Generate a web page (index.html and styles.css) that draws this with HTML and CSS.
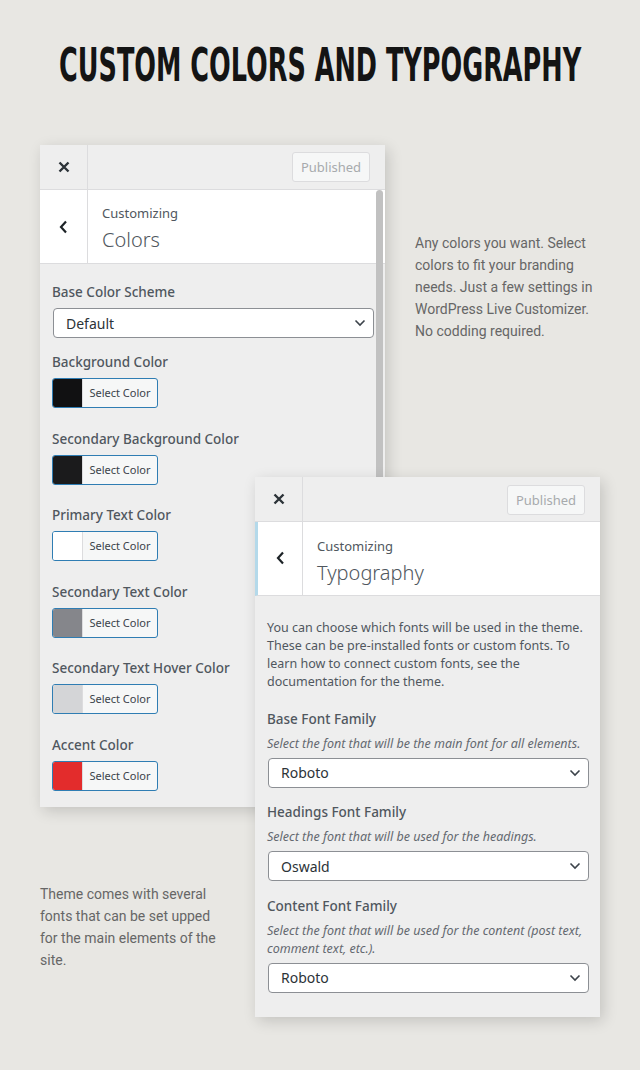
FILE: index.html
```html
<!DOCTYPE html>
<html lang="en">
<head>
    <meta charset="UTF-8">
    <meta name="viewport" content="width=device-width, initial-scale=1.0">
    <title>Custom Colors and Typography</title>
    <link rel="stylesheet" href="styles.css">
</head>
<body>
    <h1 class="headline"><span>Custom Colors and Typography</span></h1>

    <div class="showcase">
        <!-- Colors panel with the text on its right -->
        <div class="row row-top">
            <section class="panel panel-colors">
                <div class="panel-bar">
                    <span class="bar-close">
                        <svg width="12" height="12" viewBox="0 0 12 12"><path d="M1.5 1.5l9 9M10.5 1.5l-9 9" stroke="#2c3338" stroke-width="2.4" fill="none"/></svg>
                    </span>
                    <span class="bar-publish">Published</span>
                </div>
                <div class="panel-scroll">
                    <div class="panel-title">
                        <span class="title-back">
                            <svg width="9" height="14" viewBox="0 0 9 14"><path d="M7 1.5L2 7l5 5.5" stroke="#1d2327" stroke-width="2.2" fill="none"/></svg>
                        </span>
                        <div class="title-text">
                            <span class="title-small">Customizing</span>
                            <span class="title-big">Colors</span>
                        </div>
                    </div>
                    <div class="panel-body">
                        <div class="field field-scheme">
                            <label class="field-label">Base Color Scheme</label>
                            <div class="select-box">
                                <span>Default</span>
                                <svg width="12" height="8" viewBox="0 0 12 8"><path d="M1.5 1.5L6 6l4.5-4.5" stroke="#3c434a" stroke-width="1.6" fill="none"/></svg>
                            </div>
                        </div>
                        <div class="field">
                            <label class="field-label">Background Color</label>
                            <div class="color-btn"><span class="swatch swatch-black"></span><span class="color-text">Select Color</span></div>
                        </div>
                        <div class="field">
                            <label class="field-label">Secondary Background Color</label>
                            <div class="color-btn"><span class="swatch swatch-dark"></span><span class="color-text">Select Color</span></div>
                        </div>
                        <div class="field">
                            <label class="field-label">Primary Text Color</label>
                            <div class="color-btn"><span class="swatch swatch-white"></span><span class="color-text">Select Color</span></div>
                        </div>
                        <div class="field">
                            <label class="field-label">Secondary Text Color</label>
                            <div class="color-btn"><span class="swatch swatch-gray"></span><span class="color-text">Select Color</span></div>
                        </div>
                        <div class="field">
                            <label class="field-label">Secondary Text Hover Color</label>
                            <div class="color-btn"><span class="swatch swatch-light"></span><span class="color-text">Select Color</span></div>
                        </div>
                        <div class="field">
                            <label class="field-label">Accent Color</label>
                            <div class="color-btn"><span class="swatch swatch-red"></span><span class="color-text">Select Color</span></div>
                        </div>
                    </div>
                    <div class="scroll-thumb"></div>
                </div>
            </section>
            <p class="blurb blurb-colors">Any colors you want. Select colors to fit your branding needs. Just a few settings in WordPress Live Customizer. No codding required.</p>
        </div>

        <!-- Typography panel, laid over the bottom of the colors panel -->
        <div class="row row-bottom">
            <p class="blurb blurb-fonts">Theme comes with several fonts that can be set upped for the main elements of the site.</p>
            <section class="panel panel-type">
                <div class="panel-bar">
                    <span class="bar-close">
                        <svg width="12" height="12" viewBox="0 0 12 12"><path d="M1.5 1.5l9 9M10.5 1.5l-9 9" stroke="#2c3338" stroke-width="2.4" fill="none"/></svg>
                    </span>
                    <span class="bar-publish">Published</span>
                </div>
                <div class="panel-title title-active">
                    <span class="title-back">
                        <svg width="9" height="14" viewBox="0 0 9 14"><path d="M7 1.5L2 7l5 5.5" stroke="#1d2327" stroke-width="2.2" fill="none"/></svg>
                    </span>
                    <div class="title-text">
                        <span class="title-small">Customizing</span>
                        <span class="title-big">Typography</span>
                    </div>
                </div>
                <div class="panel-body body-type">
                    <p class="panel-desc">You can choose which fonts will be used in the theme. These can be pre-installed fonts or custom fonts. To learn how to connect custom fonts, see the documentation for the theme.</p>
                    <div class="font-field">
                        <label class="field-label">Base Font Family</label>
                        <p class="field-note">Select the font that will be the main font for all elements.</p>
                        <div class="select-box">
                            <span>Roboto</span>
                            <svg width="12" height="8" viewBox="0 0 12 8"><path d="M1.5 1.5L6 6l4.5-4.5" stroke="#3c434a" stroke-width="1.6" fill="none"/></svg>
                        </div>
                    </div>
                    <div class="font-field">
                        <label class="field-label">Headings Font Family</label>
                        <p class="field-note">Select the font that will be used for the headings.</p>
                        <div class="select-box">
                            <span>Oswald</span>
                            <svg width="12" height="8" viewBox="0 0 12 8"><path d="M1.5 1.5L6 6l4.5-4.5" stroke="#3c434a" stroke-width="1.6" fill="none"/></svg>
                        </div>
                    </div>
                    <div class="font-field">
                        <label class="field-label">Content Font Family</label>
                        <p class="field-note">Select the font that will be used for the content (post text, comment text, etc.).</p>
                        <div class="select-box">
                            <span>Roboto</span>
                            <svg width="12" height="8" viewBox="0 0 12 8"><path d="M1.5 1.5L6 6l4.5-4.5" stroke="#3c434a" stroke-width="1.6" fill="none"/></svg>
                        </div>
                    </div>
                </div>
            </section>
        </div>
    </div>
</body>
</html>
```

FILE: styles.css
```css
/* Base */
* {
    margin: 0;
    padding: 0;
    box-sizing: border-box;
}

body {
    background-color: #e8e7e3;
    font-family: "Noto Sans", "Open Sans", sans-serif;
    width: 640px;
    height: 1070px;
    overflow: hidden;
}

/* Page heading, a condensed bold face squeezed to width */
.headline {
    display: flex;
    justify-content: center;
    padding-top: 42px;
    line-height: 46px;
    height: 88px;
}

.headline span {
    flex-shrink: 0;
    white-space: nowrap;
    font-family: "DejaVu Sans Condensed", "Liberation Sans Narrow", sans-serif;
    font-size: 46px;
    font-weight: 700;
    color: #141414;
    text-transform: uppercase;
    transform: scaleX(0.617);
}

.showcase {
    margin-top: 57px;
}

.row {
    display: flex;
    align-items: flex-start;
}

.row-bottom {
    margin-top: -330px;
}

/* Side texts */
.blurb {
    font-family: Roboto, sans-serif;
    font-size: 14px;
    line-height: 22px;
    color: #666;
    width: 185px;
}

.blurb-colors {
    margin-left: 30px;
    margin-top: 87px;
}

.blurb-fonts {
    margin-left: 40px;
    margin-top: 406px;
}

/* Customizer panel */
.panel {
    position: relative;
    width: 345px;
    background-color: #eeeeee;
    box-shadow: 3px 4px 14px rgba(0, 0, 0, 0.16);
}

.panel-colors {
    margin-left: 40px;
}

.panel-type {
    margin-left: 30px;
}

.panel-bar {
    display: flex;
    align-items: center;
    height: 45px;
    border-bottom: 1px solid #dcdcde;
}

.bar-close {
    width: 48px;
    height: 100%;
    display: flex;
    align-items: center;
    justify-content: center;
    border-right: 1px solid #dcdcde;
}

.bar-publish {
    margin-left: auto;
    margin-right: 15px;
    width: 78px;
    height: 30px;
    line-height: 28px;
    text-align: center;
    font-size: 13px;
    color: #a7aaad;
    background-color: #f6f7f7;
    border: 1px solid #dcdcde;
    border-radius: 3px;
}

.panel-type .bar-publish {
    margin-top: 2px;
}

.panel-scroll {
    position: relative;
}

.panel-title {
    display: flex;
    background-color: #fff;
    border-bottom: 1px solid #dcdcde;
    height: 74px;
}

.title-active {
    border-left: 3px solid #b4d9ea;
}

.title-back {
    width: 48px;
    flex-shrink: 0;
    display: flex;
    align-items: center;
    justify-content: center;
    border-right: 1px solid #dcdcde;
}

.title-active .title-back {
    width: 45px;
}

.title-text {
    display: flex;
    flex-direction: column;
    padding: 14px 0 0 14px;
    color: #50575e;
}

.title-small {
    font-size: 13px;
    line-height: 18px;
}

.title-big {
    margin-top: 5px;
    font-size: 20px;
    font-weight: 300;
    line-height: 26px;
}

.title-active .title-text {
    padding-top: 15px;
}

.scroll-thumb {
    position: absolute;
    top: 0;
    bottom: 0;
    right: 2px;
    width: 7px;
    background-color: #c1c1c1;
    border-radius: 4px 4px 0 0;
}

/* Controls */
.panel-body {
    padding: 18px 11px 16px 12px;
}

.field-label {
    display: block;
    font-size: 13.5px;
    font-weight: 500;
    line-height: 20px;
    color: #50575e;
    margin-bottom: 6px;
}

.field {
    margin-bottom: 20.5px;
}

.field-scheme {
    margin-bottom: 14px;
}

.field:last-child {
    margin-bottom: 0;
}

.select-box {
    display: flex;
    align-items: center;
    justify-content: space-between;
    height: 30px;
    margin-left: 1px;
    padding: 0 7px 0 12px;
    background-color: #fff;
    border: 1px solid #8c8f94;
    border-radius: 4px;
    font-size: 14px;
    color: #2c3338;
}

.color-btn {
    display: flex;
    width: 106px;
    height: 30px;
    border: 1px solid #2f7db3;
    border-radius: 3px;
    overflow: hidden;
    background-color: #f6f7f7;
}

.swatch {
    width: 30px;
    border-right: 1px solid #dcdcde;
}

.swatch-black { background-color: #111112; }
.swatch-dark { background-color: #1b1b1c; }
.swatch-white { background-color: #ffffff; }
.swatch-gray { background-color: #85868b; }
.swatch-light { background-color: #d4d5d7; }
.swatch-red { background-color: #e32c2c; }

.color-text {
    flex: 1;
    text-align: center;
    font-size: 11px;
    line-height: 28px;
    color: #3c434a;
}

/* Typography section */
.body-type {
    padding-top: 23px;
    padding-bottom: 24px;
}

.panel-desc {
    font-size: 12.5px;
    line-height: 18px;
    color: #50575e;
    margin-bottom: 18px;
}

.font-field + .font-field {
    margin-top: 14.5px;
}

.field-note {
    font-size: 12.5px;
    font-style: italic;
    line-height: 18px;
    color: #646970;
    margin-bottom: 5px;
}
```
